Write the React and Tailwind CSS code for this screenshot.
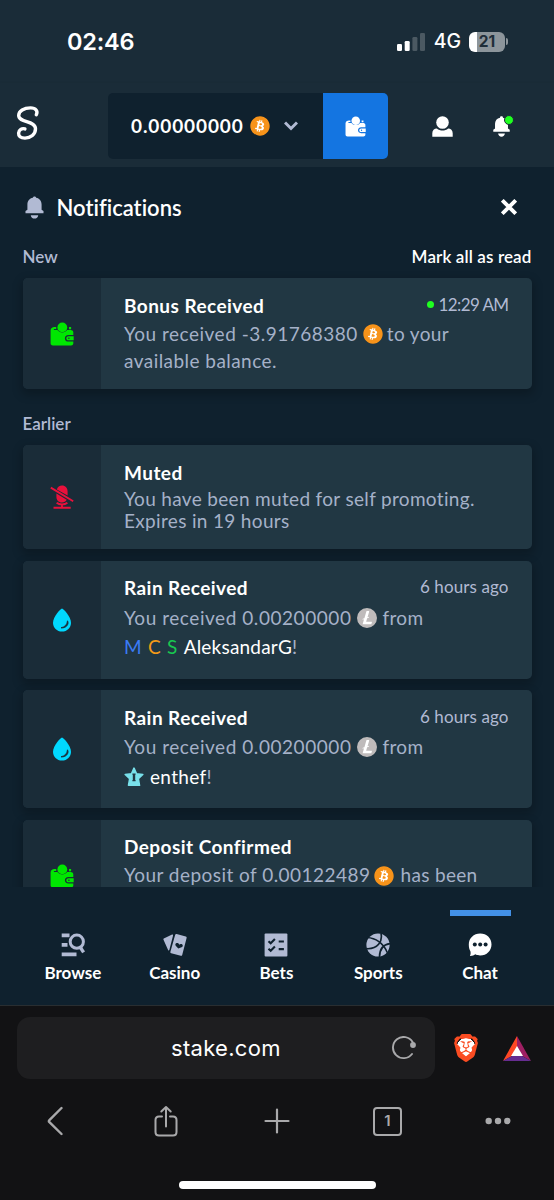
import { FaBitcoin } from "react-icons/fa6";
import { SiBrave, SiLitecoin } from "react-icons/si";

const WalletIcon = ({ className }) => (
  <svg viewBox="0 0 24 24" className={className} fill="currentColor">
    <circle cx="12.300" cy="5.400" r="4.900" />
    <path d="M4.600 5.100h1.600v1.800H4.200c-.6 0-.6 1 0 1h3.200c2.600 3.300 7.200 3.300 9.800 0h3.400c1.400 0 2.500.7 2.700 2v3h-4.800c-4.800 0-4.800 6.700 0 6.700h4.800v1.900c-.2 1.200-1 1.900-2.200 1.900H2.900C1.400 23.400.6 22.600.6 21.200V8.600c0-2.200 1.700-3.500 4-3.500Z" />
    <path d="M19 5.100h2.100v2.100H19zM18.500 14.200h5.200v4.100h-5.200c-2.900 0-2.900-4.100 0-4.100Zm.4 1.300a.75.75 0 1 0 0 1.500.75.75 0 0 0 0-1.500Z" fillRule="evenodd" />
  </svg>
);

const BellIcon = ({ className }) => (
  <svg viewBox="0 0 24 24" className={className} fill="currentColor">
    <path d="M12 .4c1.100 0 1.600.6 1.700 1.500 3.500.6 5.700 3.300 5.700 7v5.500l2 1.200v2.500H2.600v-2.500l2-1.200V8.900c0-3.700 2.200-6.400 5.700-7C10.400 1 10.900.4 12 .4ZM8.100 20h7.800c-.3 2.200-1.800 3.600-3.900 3.600S8.400 22.200 8.100 20Z" />
  </svg>
);

const MutedIcon = () => (
  <svg viewBox="0 0 24 24" className="size-6" fill="currentColor">
    <path d="M6.800 4.400C7.600 2 9.500.6 12 .6c3.400 0 5.600 2.400 5.600 5.800v4.100zM6.400 8.400l10.300 6.300c-1 1.800-2.700 2.800-4.700 2.800-3.400 0-5.600-2.400-5.600-5.800z" />
    <path d="m.8 2.600 22.400 13.600M6.600 17.800c3 2.200 7.800 2.200 10.800 0M12 18.800v3.500M3.500 22.700h17.200" fill="none" stroke="currentColor" strokeWidth="1.900" />
  </svg>
);

const DropIcon = () => (
  <svg viewBox="0 0 24 24" className="size-6">
    <path d="M12 .5c1.500 0 9 8.500 9 14.200 0 5-3.900 8.800-9 8.800s-9-3.800-9-8.800C3 9 10.500.5 12 .5Z" fill="#00d9ff" />
    <path d="M17.500 12.800c2 3.500-1.800 7.800-6.500 7 3.700-.7 6.300-3.200 6.500-7Z" fill="#1a2c38" stroke="#1a2c38" strokeWidth=".9" />
  </svg>
);

const StarIcon = () => (
  <svg viewBox="0 0 20 20" className="size-5 shrink-0">
    <path d="m10 1.200 2.500 5.600 6.300.7-4.500 4.200 1.200 6.600H4.500l1.200-6.600L1.200 7.500l6.300-.7z" fill="#78e0ea" stroke="#78e0ea" strokeWidth="1.600" strokeLinejoin="round" />
    <path d="M8.400 6.500h3.200v1.200h-.4v5.400h.4v1.200H8.400v-1.200h.4V7.700h-.4z" fill="#213743" />
  </svg>
);

const Coin = ({ type }) => (
  <span className="flex size-5 shrink-0 items-center justify-center rounded-full bg-[radial-gradient(circle,#fff_60%,transparent_62%)]">
    {type === "btc" ? (
      <FaBitcoin className="size-5 text-[#f7931a]" />
    ) : (
      <SiLitecoin className="size-5 text-[#bfbbbb]" />
    )}
  </span>
);

const BrowseIcon = () => (
  <svg viewBox="0 0 24 24" className="size-6" fill="none" stroke="currentColor">
    <path d="M.7 2.400h7.800M.7 11.800h5.800M.7 21.300h14.800" strokeWidth="3.800" />
    <circle cx="15.800" cy="8.700" r="6.600" strokeWidth="3" />
    <path d="m18.900 13.600 3.700 5.800" strokeWidth="3.400" />
  </svg>
);

const CasinoIcon = () => (
  <svg viewBox="0 0 24 24" className="size-6" fill="currentColor">
    <path d="m.8 5.400 7.800-3.700c1-.4 1.700.1 1.400 1.100L6.400 16.700c-.3.9-1 .9-1.300.2L.5 6.700C.2 6.100.3 5.600.8 5.400Z" />
    <path d="m13.600 1 9.200 2.600c.7.200 1 .7.800 1.400l-4.400 16.900c-.2.7-.7 1-1.400.8L8.200 20.200c-.7-.2-1-.7-.8-1.400l4.800-17c.2-.6.7-1 1.400-.8Zm.4 9.100c-1.500-.1-2.100 1.500-1.300 2.600l2.600 2.700 3.200-1.100c2.300-.8 1.200-3.800-1-3.200l-1 .7c-.6-1.100-1.300-1.700-2.500-1.700Z" fillRule="evenodd" />
  </svg>
);

const BetsIcon = () => (
  <svg viewBox="0 0 24 24" className="size-6">
    <rect x=".6" y=".6" width="22.800" height="22.800" rx="1" fill="currentColor" />
    <path d="m4.500 8.200 2.200 2.100 4.200-4.200m-6.400 9.600 2.200 2.100 4.200-4.200M14.700 8.500h5.200m-5.200 7.600h5.200" fill="none" stroke="#0f212e" strokeWidth="2.100" />
  </svg>
);

const SportsIcon = () => (
  <svg viewBox="0 0 24 24" className="size-6">
    <circle cx="12" cy="12" r="11.600" fill="currentColor" />
    <path d="M1 4.500c8.500.4 16.500 5.600 20.200 15M15 .2c1.800 8.500-3.400 16-14.200 15.500M24 10.600c-6.300.9-10.500 5.200-10.500 13.400" fill="none" stroke="#0f212e" strokeWidth="1.700" />
  </svg>
);

const ChatIcon = () => (
  <svg viewBox="0 0 24 24" className="size-6">
    <path d="M12.200.6c6.500 0 11.300 4.700 11.300 10.800s-4.800 11-11.300 11c-2.200 0-3.500-.4-5-1.200-1.400 1.300-3 1.800-5.200 1.700.6-1.500.8-2.900.4-4.600C1.300 16.400.8 14.100.8 11.500.8 5.300 5.700.6 12.200.6Z" fill="currentColor" />
    <g fill="#0f212e">
      <circle cx="6.800" cy="11.500" r="2" />
      <circle cx="12.200" cy="11.500" r="2" />
      <circle cx="17.600" cy="11.500" r="2" />
    </g>
  </svg>
);

const tabs = [
  { label: "Browse", Icon: BrowseIcon },
  { label: "Casino", Icon: CasinoIcon },
  { label: "Bets", Icon: BetsIcon },
  { label: "Sports", Icon: SportsIcon },
  { label: "Chat", Icon: ChatIcon, active: true },
];

function Notification({ icon, title, time, unread, height, children }) {
  return (
    <div className={`flex shrink-0 overflow-hidden rounded-[5px] bg-[#213743] shadow-[0_4px_10px_2px_rgba(0,0,0,0.22)] ${height}`}>
      <div className="flex w-[78.5px] shrink-0 items-center justify-center bg-[#1a2c38]">{icon}</div>
      <div className="min-w-0 flex-1 pt-4 pr-[23px] pl-[23px]">
        <div className="flex h-6 items-center justify-between">
          <h3 className="text-[19px] font-bold tracking-[0.45px] text-white">{title}</h3>
          {time && (
            <span className={`flex items-center gap-[5px] pb-[3px] text-[17px] text-[#b1bad3] ${unread ? "tracking-[-0.6px]" : "tracking-[0.1px]"}`}>
              {unread && <i className="size-[7px] rounded-full bg-[#1fff20]" />}
              {time}
            </span>
          )}
        </div>
        <div className="mt-[2.5px] text-[19px] tracking-[0.33px] whitespace-nowrap text-[#a5b1c8]">{children}</div>
      </div>
    </div>
  );
}

function StatusBar() {
  return (
    <div className="flex h-[83px] shrink-0 items-center justify-between bg-[#1a2c38] pr-[46px] pl-[67px] font-['Inter',sans-serif] text-white">
      <span className="text-[23.500px] font-semibold tracking-[-0.2px]">02:46</span>
      <div className="flex items-center">
        <svg viewBox="0 0 28 18" className="h-[18px] w-7">
          <rect x="0" y="11" width="5" height="7" rx="1.300" fill="#fff" />
          <rect x="7.700" y="8" width="5" height="10" rx="1.300" fill="#fff" />
          <rect x="15.400" y="4" width="5" height="14" rx="1.300" fill="#4b5962" />
          <rect x="23" y="0" width="5" height="18" rx="1.300" fill="#4b5962" />
        </svg>
        <span className="ml-[9px] text-[19.500px] font-medium">4G</span>
        <div className="ml-2 flex h-5 w-9 items-center justify-center rounded-[6px] bg-[linear-gradient(90deg,#fff_8px,#8c959b_8px)] text-[15.500px] font-bold text-[#1f2e39]">
          21
        </div>
        <i className="ml-px h-[7px] w-[2px] rounded-r-full bg-[#8c959b]" />
      </div>
    </div>
  );
}

function Header() {
  return (
    <header className="flex h-[84px] shrink-0 items-center bg-[#1a2c38] pt-[2px] text-white shadow-[0_2px_4px_rgba(0,0,0,0.2)]">
      <svg viewBox="0 0 24 36" className="-mt-[6px] ml-4 h-9 w-6" fill="none" stroke="currentColor" strokeWidth="3.400" strokeLinecap="round">
        <path d="M20.300 9.800C22.100 6.200 20 2.900 14.500 2.900 8 2.900 2.700 5.800 2.700 10.600c0 7.600 16.800 4.600 16.800 13.200 0 5.600-4.800 9.300-10.500 9.300-4.500 0-6.600-2.100-6.400-5 .2-3.200 3.400-5.200 6.300-4.200" />
      </svg>
      <div className="ml-[68px] flex h-[66px] w-[280px] overflow-hidden rounded-[5px]">
        <div className="flex w-[215px] items-center bg-[#0f212e] pl-[23px]">
          <span className="w-[113px] text-[19px] font-bold tracking-[0.9px] whitespace-nowrap">0.00000000</span>
          <span className="ml-[6px]"><Coin type="btc" /></span>
          <svg viewBox="0 0 14 10" className="ml-[14px] h-[10px] w-[14px]" fill="none" stroke="#b1bad3" strokeWidth="3">
            <path d="m1 1.500 6 6 6-6" />
          </svg>
        </div>
        <div className="flex w-[65px] items-center justify-center bg-[#1475e1]">
          <WalletIcon className="size-[21px]" />
        </div>
      </div>
      <svg viewBox="0 0 21 21" className="ml-[44px] size-[21px]" fill="currentColor">
        <circle cx="10.500" cy="6.500" r="6.300" />
        <path d="M.3 20.700v-3.500c0-3 2-4.800 4.500-4.800 3.500 2.800 8 2.800 11.400 0 2.500 0 4.500 1.800 4.500 4.800v3.500z" />
      </svg>
      <div className="relative ml-[38px]">
        <BellIcon className="size-[21px]" />
        <i className="absolute -top-px right-[-2px] size-[10px] rounded-full border border-[#1a2c38] bg-[#1fff20]" />
      </div>
    </header>
  );
}

function Notifications() {
  return (
    <section className="flex h-[720px] shrink-0 flex-col overflow-hidden bg-[#0f212e] pr-[22.500px] pl-[22.500px]">
      <div className="mt-[28px] flex h-6 items-center">
        <BellIcon className="size-[23px] text-[#b1bad3]" />
        <h2 className="ml-[11px] text-[22px] font-semibold text-white [font-variant-ligatures:none]">Notifications</h2>
        <svg viewBox="0 0 16 16" className="mr-[15px] ml-auto size-4" stroke="#fff" strokeWidth="3.800">
          <path d="m1.300 1.300 13.400 13.400M14.700 1.300 1.300 14.700" />
        </svg>
      </div>
      <div className="mt-[26px] flex h-6 items-center justify-between text-[17px] font-semibold">
        <span className="text-[#b1bad3]">New</span>
        <button className="tracking-[0.12px] text-white">Mark all as read</button>
      </div>
      <div className="mt-[9px] flex flex-col">
        <Notification height="h-[111px]" title="Bonus Received" time="12:29 AM" unread icon={<WalletIcon className="size-6 text-[#00e701]" />}>
          <p className="flex h-[27px] items-center">
            <span className="mr-[5px] tracking-[0.5px]">You received -3.91768380</span>
            <Coin type="btc" />
            <span className="ml-1">to your</span>
          </p>
          <p className="flex h-[27px] items-center tracking-[0.45px]">available balance.</p>
        </Notification>
      </div>
      <h4 className="mt-[23px] flex h-6 shrink-0 items-center text-[17px] font-semibold text-[#b1bad3]">Earlier</h4>
      <div className="mt-[9px] flex flex-col gap-[11.500px]">
        <Notification height="h-[104px]" title="Muted" icon={<span className="text-[#e9113c]"><MutedIcon /></span>}>
          <p className="leading-[22.500px]">You have been muted for self promoting.<br />Expires in 19 hours</p>
        </Notification>
        <Notification height="h-[118px]" title="Rain Received" time="6 hours ago" icon={<DropIcon />}>
          <p className="flex h-[29.500px] items-center">
            <span className="mr-[6px] tracking-[0.55px]">You received 0.00200000</span>
            <Coin type="ltc" />
            <span className="ml-[5px]">from</span>
          </p>
          <p className="flex h-[29.500px] items-center gap-[6px]">
            <span className="text-[#3b7bf5]">M</span>
            <span className="text-[#f59b18]">C</span>
            <span className="text-[#18c850]">S</span>
            <span className="tracking-[0.2px]"><span className="text-white">AleksandarG</span>!</span>
          </p>
        </Notification>
        <Notification height="h-[118px]" title="Rain Received" time="6 hours ago" icon={<DropIcon />}>
          <p className="flex h-[29.500px] items-center">
            <span className="mr-[6px] tracking-[0.55px]">You received 0.00200000</span>
            <Coin type="ltc" />
            <span className="ml-[5px]">from</span>
          </p>
          <p className="flex h-[29.500px] items-center gap-[6px]">
            <StarIcon />
            <span><span className="text-white">enthef</span>!</span>
          </p>
        </Notification>
        <Notification height="h-[112px]" title="Deposit Confirmed" icon={<WalletIcon className="size-6 text-[#00e701]" />}>
          <p className="flex h-[27px] items-center">
            <span className="mr-[4px] tracking-[0.46px]">Your deposit of 0.00122489</span>
            <Coin type="btc" />
            <span className="ml-[6px]">has been</span>
          </p>
        </Notification>
      </div>
    </section>
  );
}

function BottomNav() {
  return (
    <nav className="grid h-[118px] shrink-0 grid-cols-5 bg-[#0f212e] pr-[23px] pl-[22px] pt-[23px]">
      {tabs.map(({ label, Icon, active }) => (
        <div key={label} className={`flex flex-col items-center ${active ? "text-white" : "text-[#b1bad3]"}`}>
          <span className={`h-[5.500px] w-[61px] ${active ? "bg-[#4391e7]" : ""}`} />
          <span className="mt-[17.500px]"><Icon /></span>
          <span className="mt-[4px] text-[17px] leading-6 font-bold text-white">{label}</span>
        </div>
      ))}
    </nav>
  );
}

function BrowserBar() {
  return (
    <footer className="h-[195px] shrink-0 border-t border-[#292e31] bg-[#121214] font-['Inter',sans-serif] text-[#a9a9ab]">
      <div className="flex items-center pt-[11px] pl-[17px]">
        <div className="flex h-[62px] w-[418px] items-center rounded-[13px] bg-[#1e1e20]">
          <span className="ml-[154px] text-[22px] tracking-[0.3px] text-white">stake.com</span>
          <svg viewBox="0 0 24 24" className="mr-[19px] ml-auto size-6" fill="none" stroke="currentColor" strokeWidth="1.900" strokeLinecap="round">
            <path d="M20.600 6A10.600 10.600 0 1 0 20 18" />
            <circle cx="21" cy="9" r="2.900" fill="currentColor" stroke="none" />
          </svg>
        </div>
        <span className="ml-[18px] flex h-7 w-[26px] items-center justify-center bg-[radial-gradient(ellipse,#fff_50%,transparent_52%)]">
          <SiBrave className="size-[28px] shrink-0 text-[#fa4c22]" />
        </span>
        <svg viewBox="0 0 28 25" className="ml-[24px] h-[25px] w-7">
          <path d="M14 0 0 25l9-5 5-9z" fill="#ff4724" />
          <path d="m14 0 14 25-9-5-5-9z" fill="#9e1f63" />
          <path d="M0 25h28l-9-5H9z" fill="#662d91" />
          <path d="m14 10-6 10h12z" fill="#fff" />
        </svg>
      </div>
      <div className="mt-[22px] flex h-10 items-center pl-[47px]">
        <svg viewBox="0 0 16 30" className="h-[30px] w-4" fill="none" stroke="currentColor" strokeWidth="2.400" strokeLinecap="round">
          <path d="M14.500 2 2.400 14.200q-1 1 0 2L14.500 28" />
        </svg>
        <svg viewBox="0 0 24 32" className="ml-[91px] h-8 w-6" fill="none" stroke="currentColor" strokeWidth="2" strokeLinecap="round" strokeLinejoin="round">
          <path d="M8 11.500H5q-3.500 0-3.500 3.500v12q0 3.500 3.500 3.500h14q3.500 0 3.500-3.500V15q0-3.500-3.500-3.500h-3M12 21.500V2M7.300 6.500 12 2l4.700 4.500" />
        </svg>
        <svg viewBox="0 0 26 26" className="ml-[86px] size-[26px]" stroke="currentColor" strokeWidth="2.200" strokeLinecap="round">
          <path d="M13 1.500v23M1.500 13h23" />
        </svg>
        <span className="ml-[83px] flex size-[29px] items-center justify-center rounded-[4px] border-2 border-current text-[15px] font-semibold">1</span>
        <svg viewBox="0 0 26 8" className="ml-[83px] h-2 w-[26px]" fill="currentColor">
          <circle cx="3.700" cy="4" r="3.200" />
          <circle cx="13" cy="4" r="3.200" />
          <circle cx="22.300" cy="4" r="3.200" />
        </svg>
      </div>
      <div className="mt-[40px] ml-[179px] h-2 w-[197px] rounded-full bg-white" />
    </footer>
  );
}

export default function App() {
  return (
    <div className="flex h-[1200px] w-[554px] flex-col overflow-hidden bg-[#0f212e] font-['Lato','Open_Sans',sans-serif]">
      <StatusBar />
      <Header />
      <Notifications />
      <BottomNav />
      <BrowserBar />
    </div>
  );
}
